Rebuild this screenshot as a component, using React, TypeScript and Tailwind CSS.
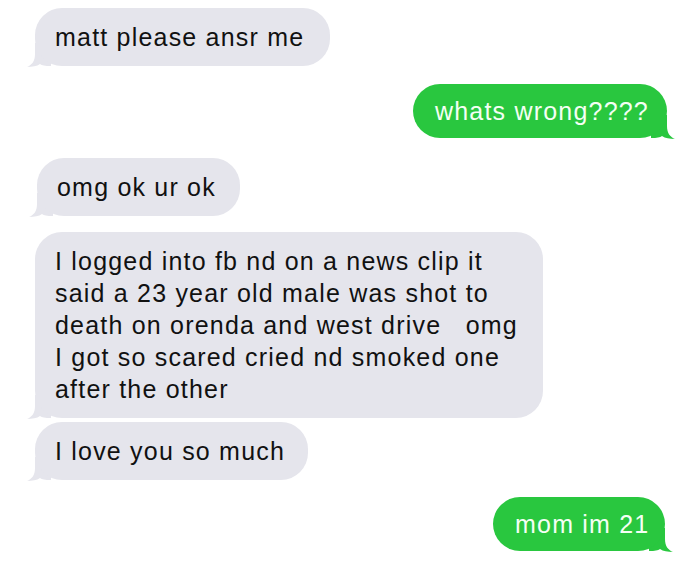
function Tail({ side, color }: { side: "left" | "right"; color: string }) {
  return (
    <svg
      width="24"
      height="24"
      viewBox="0 0 24 24"
      className={
        side === "left"
          ? "absolute -left-[8px] -bottom-[1px]"
          : "absolute -right-[8px] -bottom-[1px] -scale-x-100"
      }
    >
      <path
        d="M8 0 L24 0 L24 23 C18 23 15 22.5 13 21 C10 23.3 5 24 0 24 C5 22 8 18 8 11 Z"
        fill={color}
      />
    </svg>
  );
}

function Received({ children, width, className = "" }: { children: React.ReactNode; width: string; className?: string }) {
  return (
    <div className={`relative self-start ${width} ${className}`}>
      <Tail side="left" color="#e5e5ec" />
      <div className="relative rounded-[27px] bg-[#e5e5ec] pl-[20px] pr-[14px] py-[13px] text-[#111] whitespace-pre">
        {children}
      </div>
    </div>
  );
}

function Sent({ children, width, className = "" }: { children: React.ReactNode; width: string; className?: string }) {
  return (
    <div className={`relative self-end ${width} ${className}`}>
      <Tail side="right" color="#29c73f" />
      <div className="relative rounded-[27px] bg-[#29c73f] pl-[22px] pr-[14px] py-[11px] text-[#f4fff4]">
        {children}
      </div>
    </div>
  );
}

export default function App() {
  return (
    <div
      className="flex flex-col w-[700px] h-[573px] bg-white pt-[8px] pl-[35px] pr-[33px] text-[25px] leading-[32px] tracking-[1.2px] overflow-hidden"
      style={{ fontFamily: '"Liberation Sans", Arial, sans-serif' }}
    >
      <Received width="w-[295px]">matt please ansr me</Received>
      <Sent width="w-[254px]" className="mt-[18px]">whats wrong????</Sent>
      <Received width="w-[203px]" className="mt-[20px] ml-[2px]">omg ok ur ok</Received>
      <Received width="w-[508px]" className="mt-[16px]">
        {"I logged into fb nd on a news clip it\nsaid a 23 year old male was shot to\ndeath on orenda and west drive   omg\nI got so scared cried nd smoked one\nafter the other"}
      </Received>
      <Received width="w-[273px]" className="mt-[4px]">I love you so much</Received>
      <Sent width="w-[172px]" className="mt-[17px] mr-[2px]">mom im 21</Sent>
    </div>
  );
}
